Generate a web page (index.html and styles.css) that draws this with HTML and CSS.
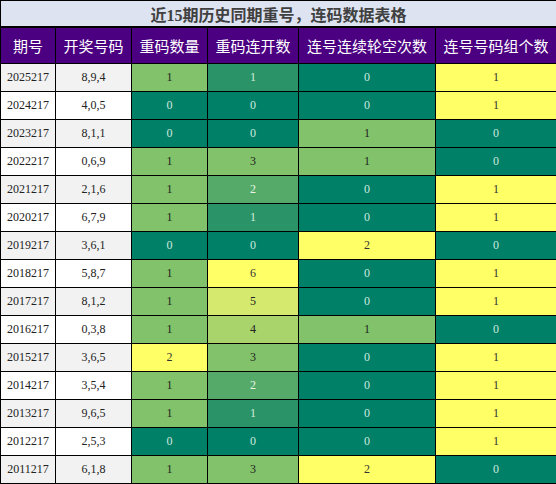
FILE: index.html
```html
<!DOCTYPE html>
<html lang="zh">
<head>
  <meta charset="UTF-8">
  <meta name="viewport" content="width=device-width, initial-scale=1.0">
  <title>重号连码数据表格</title>
  <link rel="stylesheet" href="styles.css">
</head>
<body>

  <table class="data-table">
    <colgroup>
      <col class="c-qh">
      <col class="c-kj">
      <col class="c-n3">
      <col class="c-n4">
      <col class="c-n5">
      <col class="c-n6">
    </colgroup>
    <thead>
      <tr class="title-row">
        <th colspan="6">近15期历史同期重号，连码数据表格</th>
      </tr>
      <tr class="head-row">
        <th>期号</th>
        <th>开奖号码</th>
        <th>重码数量</th>
        <th>重码连开数</th>
        <th>连号连续轮空次数</th>
        <th>连号号码组个数</th>
      </tr>
    </thead>
    <tbody>
      <tr><td>2025217</td><td>8,9,4</td><td class="g1">1</td><td class="s1">1</td><td class="g0">0</td><td class="y">1</td></tr>
      <tr><td>2024217</td><td>4,0,5</td><td class="g0">0</td><td class="g0">0</td><td class="g0">0</td><td class="y">1</td></tr>
      <tr><td>2023217</td><td>8,1,1</td><td class="g0">0</td><td class="g0">0</td><td class="g1">1</td><td class="g0">0</td></tr>
      <tr><td>2022217</td><td>0,6,9</td><td class="g1">1</td><td class="g1">3</td><td class="g1">1</td><td class="g0">0</td></tr>
      <tr><td>2021217</td><td>2,1,6</td><td class="g1">1</td><td class="s2">2</td><td class="g0">0</td><td class="y">1</td></tr>
      <tr><td>2020217</td><td>6,7,9</td><td class="g1">1</td><td class="s1">1</td><td class="g0">0</td><td class="y">1</td></tr>
      <tr><td>2019217</td><td>3,6,1</td><td class="g0">0</td><td class="g0">0</td><td class="y">2</td><td class="g0">0</td></tr>
      <tr><td>2018217</td><td>5,8,7</td><td class="g1">1</td><td class="y">6</td><td class="g0">0</td><td class="y">1</td></tr>
      <tr><td>2017217</td><td>8,1,2</td><td class="g1">1</td><td class="s5">5</td><td class="g0">0</td><td class="y">1</td></tr>
      <tr><td>2016217</td><td>0,3,8</td><td class="g1">1</td><td class="s4">4</td><td class="g1">1</td><td class="g0">0</td></tr>
      <tr><td>2015217</td><td>3,6,5</td><td class="y">2</td><td class="g1">3</td><td class="g0">0</td><td class="y">1</td></tr>
      <tr><td>2014217</td><td>3,5,4</td><td class="g1">1</td><td class="s2">2</td><td class="g0">0</td><td class="y">1</td></tr>
      <tr><td>2013217</td><td>9,6,5</td><td class="g1">1</td><td class="s1">1</td><td class="g0">0</td><td class="y">1</td></tr>
      <tr><td>2012217</td><td>2,5,3</td><td class="g0">0</td><td class="g0">0</td><td class="g0">0</td><td class="y">1</td></tr>
      <tr><td>2011217</td><td>6,1,8</td><td class="g1">1</td><td class="g1">3</td><td class="y">2</td><td class="g0">0</td></tr>
    </tbody>
  </table>

</body>
</html>
```

FILE: styles.css
```css
body {
  margin: 0;
  padding: 0;
  background-color: #fff;
  font-family: "Liberation Serif", "Noto Sans CJK SC", serif;
}

/* Tabelle */
.data-table {
  width: 556px;
  border-collapse: collapse;
  table-layout: fixed;
}

.c-qh { width: 55px; }
.c-kj { width: 76px; }
.c-n3 { width: 76px; }
.c-n4 { width: 91px; }
.c-n5 { width: 137px; }
.c-n6 { width: 121px; }

.data-table th,
.data-table td {
  border: 1px solid #000;
  text-align: center;
  padding: 0;
}

.title-row th {
  height: 25px;
  background-color: #dde3f0;
  color: #404040;
  font-family: "Liberation Serif", "Noto Sans CJK SC", serif;
  font-size: 16px;
  font-weight: bold;
  border-bottom: 2px solid #000;
}

.head-row th {
  height: 35px;
  background-color: #4b0082;
  color: #fff;
  font-family: "Noto Sans CJK SC", sans-serif;
  font-size: 15px;
  font-weight: normal;
}

.data-table td {
  height: 27px;
  font-size: 12px;
  color: #222;
}

.data-table tbody tr:nth-child(odd) td {
  background-color: #f2f2f2;
}

.data-table tbody tr:nth-child(even) td {
  background-color: #fff;
}

/* Farbskala */
.data-table tbody tr td.g0 { background-color: #008066; color: #cfe9df; }
.data-table tbody tr td.s1 { background-color: #2b9368; color: #d4ecd9; }
.data-table tbody tr td.s2 { background-color: #55aa6a; color: #e6f4e4; }
.data-table tbody tr td.g1 { background-color: #82c26a; color: #222; }
.data-table tbody tr td.s4 { background-color: #a9d46c; color: #222; }
.data-table tbody tr td.s5 { background-color: #d4e96e; color: #222; }
.data-table tbody tr td.y  { background-color: #ffff66; color: #333; }
```
